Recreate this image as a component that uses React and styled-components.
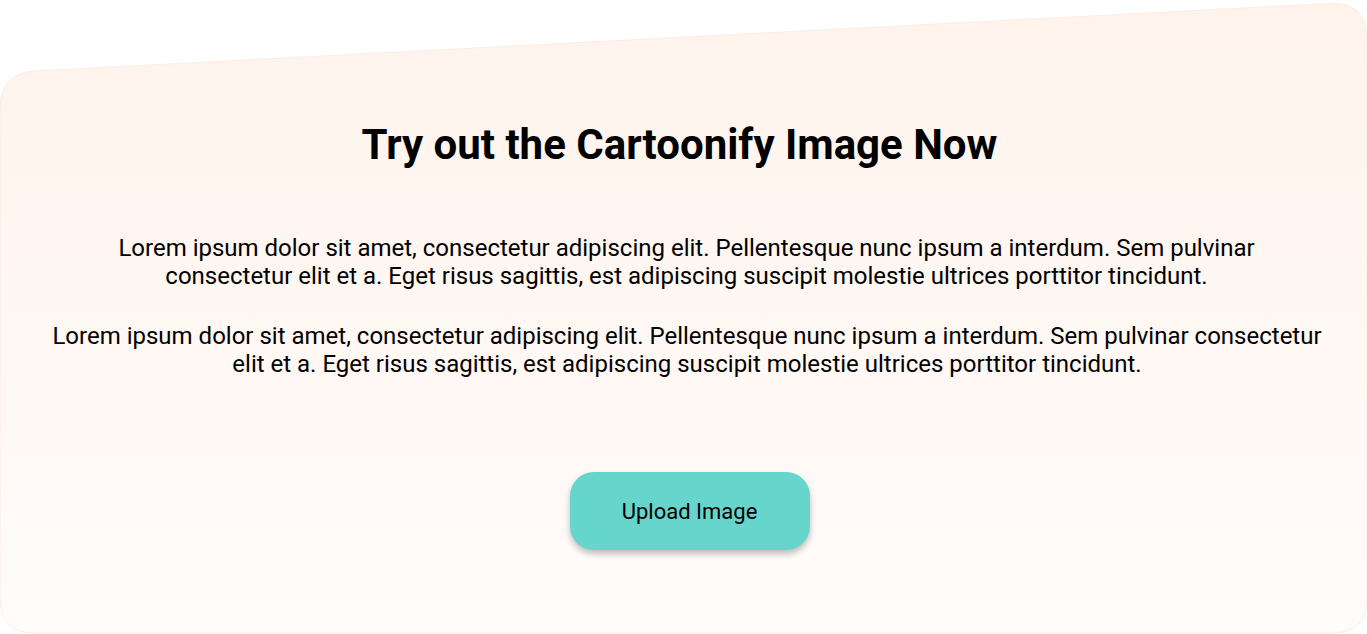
import React from 'react';
import styled, { createGlobalStyle } from 'styled-components';

const GlobalStyle = createGlobalStyle`
  html, body {
    margin: 0;
    padding: 0;
    background: #ffffff;
  }
  body {
    font-family: Roboto, "Liberation Sans", sans-serif;
    color: #000;
  }
`;

const Section = styled.section`
  position: relative;
  width: 1367px;
  height: 634px;
  overflow: hidden;
`;

const Backdrop = styled.svg`
  position: absolute;
  left: 0;
  top: 0;
  width: 100%;
  height: 100%;
  z-index: 0;
`;

const Content = styled.div`
  position: relative;
  z-index: 1;
  display: flex;
  flex-direction: column;
  align-items: center;
  padding-top: 119px;
`;

const Title = styled.h1`
  margin: 0 0 0 -8px;
  font-size: 42px;
  line-height: 52px;
  font-weight: 700;
  text-align: center;
`;

const Text = styled.p`
  margin: ${(p) => p.$top}px 0 0 ${(p) => p.$shift}px;
  max-width: ${(p) => p.$width}px;
  font-size: 24px;
  line-height: 28px;
  text-align: center;
`;

const UploadButton = styled.button`
  margin-top: 94px;
  margin-left: 12px;
  width: 240px;
  height: 78px;
  border: none;
  border-radius: 24px;
  background: #66d6cd;
  box-shadow: 0 4px 6px rgba(0, 0, 0, 0.25);
  font-family: Roboto, "Liberation Sans", sans-serif;
  font-size: 22px;
  color: #000;
  cursor: pointer;
`;

const lorem =
  'Lorem ipsum dolor sit amet, consectetur adipiscing elit. Pellentesque nunc ipsum a interdum. Sem pulvinar consectetur elit et a. Eget risus sagittis, est adipiscing suscipit molestie ultrices porttitor tincidunt.';

export default function App() {
  return (
    <>
      <GlobalStyle />
      <Section>
        <Backdrop viewBox="0 0 1367 634" preserveAspectRatio="none">
          <defs>
            <linearGradient id="card" x1="0" y1="0" x2="0" y2="1">
              <stop offset="0" stopColor="#fff3ec" />
              <stop offset="1" stopColor="#fffcfa" />
            </linearGradient>
          </defs>
          <path
            d="M0 108 Q0 73 35 71 L1330 3.5 Q1367 1.5 1367 40 L1367 598 Q1367 633 1332 633 L35 633 Q0 633 0 598 Z"
            fill="url(#card)"
            stroke="#fdece2"
            strokeWidth="1"
          />
        </Backdrop>
        <Content>
          <Title>Try out the Cartoonify Image Now</Title>
          <Text $top={63} $shift={6} $width={1180}>{lorem}</Text>
          <Text $top={32} $shift={7} $width={1290}>{lorem}</Text>
          <UploadButton>Upload Image</UploadButton>
        </Content>
      </Section>
    </>
  );
}
